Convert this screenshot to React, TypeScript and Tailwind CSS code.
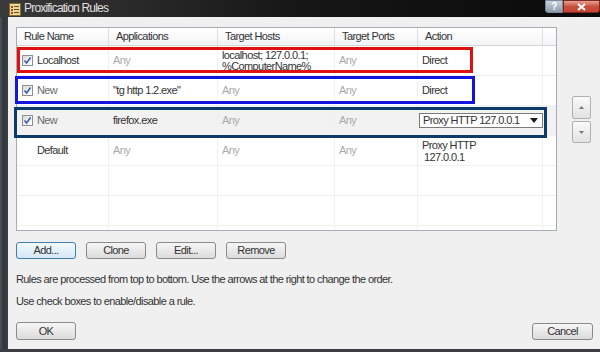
import React from 'react';

const font = "font-['Liberation_Sans',Arial,sans-serif]";

function Check() {
  return (
    <span className="w-[11px] h-[11px] border border-[#8e8f8f] bg-linear-to-br from-[#dcdcdc] to-white flex items-center justify-center shrink-0">
      <svg width="9" height="9" viewBox="0 0 9 9">
        <path d="M1.5 4.5 L3.6 7 L7.6 1.5" fill="none" stroke="#3a5ea8" strokeWidth="1.6" />
      </svg>
    </span>
  );
}

function Btn({ label, focused }: { label: string; focused?: boolean }) {
  return (
    <button
      className={
        focused
          ? 'w-[60px] h-[17px] rounded-[3px] border border-[#3c7fb1] bg-linear-to-b from-[#f4f9fd] to-[#d5e7f5] text-[11px] text-[#333] leading-none'
          : 'w-[60px] h-[17px] rounded-[3px] border border-[#8a8a8a] bg-linear-to-b from-[#f6f6f6] to-[#dcdcdc] text-[11px] text-[#333] leading-none'
      }
    >
      {label}
    </button>
  );
}

const cols = 'grid grid-cols-[92px_109px_117px_83px_125px_14px]';

type Row = {
  check?: boolean;
  name?: string;
  nameDark?: boolean;
  app?: string;
  appGray?: boolean;
  hosts?: string[];
  hostsGray?: boolean;
  ports?: string;
  action?: React.ReactNode;
  selected?: boolean;
};

const rows: Row[] = [
  {
    check: true,
    name: 'Localhost',
    nameDark: true,
    app: 'Any',
    appGray: true,
    hosts: ['localhost; 127.0.0.1;', '%ComputerName%'],
    ports: 'Any',
    action: 'Direct',
  },
  { check: true, name: 'New', app: '"tg http 1.2.exe"', hosts: ['Any'], hostsGray: true, ports: 'Any', action: 'Direct' },
  {
    check: true,
    name: 'New',
    app: 'firefox.exe',
    hosts: ['Any'],
    hostsGray: true,
    ports: 'Any',
    selected: true,
    action: (
      <div className="h-[15px] w-[124px] shrink-0 whitespace-nowrap -ml-[3px] bg-white border border-[#7a7a7a] flex items-center justify-between pl-[3px] pr-[4px]">
        <span>Proxy HTTP 127.0.0.1</span>
        <svg width="8" height="5" viewBox="0 0 8 5">
          <path d="M0 0 H8 L4 5 Z" fill="#1a1a1a" />
        </svg>
      </div>
    ),
  },
  {
    name: 'Default',
    nameDark: true,
    app: 'Any',
    appGray: true,
    hosts: ['Any'],
    hostsGray: true,
    ports: 'Any',
    action: (
      <div className="leading-[12px]">
        <div>Proxy HTTP</div>
        <div className="pl-[2px]">127.0.0.1</div>
      </div>
    ),
  },
  {},
  {},
  {},
];

export default function App() {
  return (
    <div className={`w-[600px] h-[352px] overflow-hidden relative flex flex-col bg-[#2a2a2a] text-[11px] tracking-[-0.6px] ${font}`}>
      {/* title bar */}
      <div className="h-[17px] flex items-start bg-linear-to-r from-[#3a3a3a] via-[#161616] to-[#0a0a0a]">
        <svg className="ml-[9px] mt-[3px]" width="12" height="13" viewBox="0 0 12 13">
          <rect x="0.5" y="0.5" width="11" height="12" fill="#e9d79a" stroke="#8a6a2a" />
          <rect x="2" y="3" width="2" height="2" fill="#b04020" />
          <rect x="5" y="3" width="5" height="1" fill="#6a4a20" />
          <rect x="2" y="6" width="2" height="2" fill="#b04020" />
          <rect x="5" y="6" width="5" height="1" fill="#6a4a20" />
          <rect x="2" y="9" width="2" height="2" fill="#b04020" />
          <rect x="5" y="9" width="5" height="1" fill="#6a4a20" />
        </svg>
        <span className="ml-[3px] mt-[1px] text-[12px] tracking-[-0.8px] text-[#e0e0e0] leading-[15px]">Proxification Rules</span>
        <div className="flex-1" />
        <div className="w-[18px] h-[13px] rounded-bl-[3px] border border-[#7f8a99] bg-linear-to-b from-[#c9d3de] to-[#8c9aab] flex items-center justify-center text-[10px] text-white font-bold leading-none">
          ?
        </div>
        <div className="w-[37px] h-[13px] rounded-br-[3px] border border-[#7a2a20] bg-linear-to-b from-[#e8a090] via-[#c85040] to-[#c84030] flex items-center justify-center">
          <svg width="9" height="8" viewBox="0 0 9 8">
            <path d="M1 1 L8 7 M8 1 L1 7" stroke="white" strokeWidth="2" />
          </svg>
        </div>
      </div>

      <div className="flex-1 flex">
        <div className="w-[8px] bg-linear-to-r from-[#4d535b] via-[#2f333a] to-[#3b3f46]" />
        <div className="flex-1 bg-[#f0f0f0] flex flex-col pt-[10px] pl-[8px] text-[#333]">
          <div className="flex">
            <div className="w-[541px] h-[204px] border border-[#a5acb5] bg-white overflow-hidden">
              {/* header */}
              <div className={`${cols} h-[18px] bg-linear-to-b from-white to-[#f3f4f6] border-b border-[#d5d5d5] text-[#333]`}>
                {['Rule Name', 'Applications', 'Target Hosts', 'Target Ports', 'Action', ''].map((h, i) => (
                  <div key={i} className="border-r border-[#dedede] pl-[7px] flex items-center">
                    {h}
                  </div>
                ))}
              </div>
              {rows.map((r, i) => (
                <div
                  key={i}
                  className={`${cols} h-[30px] border-b border-[#f0f0f0] ${r.selected ? 'bg-[#f2f2f2]' : 'bg-white'}`}
                >
                  <div className="border-r border-[#f0f0f0] flex items-center pl-[5px] gap-[4px]">
                    {r.check ? <Check /> : <span className="w-[11px]" />}
                    <span className={r.nameDark ? 'text-[#333]' : 'text-[#6a6a6a]'}>{r.name}</span>
                  </div>
                  <div className={`border-r border-[#f0f0f0] flex items-center pl-[4px] whitespace-nowrap ${r.appGray ? 'text-[#aaa]' : 'text-[#333]'}`}>
                    {r.app}
                  </div>
                  <div className={`border-r border-[#f0f0f0] flex flex-col justify-center pl-[4px] leading-[11px] whitespace-nowrap ${r.hostsGray ? 'text-[#aaa]' : 'text-[#333]'}`}>
                    {r.hosts?.map((h) => (
                      <div key={h}>{h}</div>
                    ))}
                  </div>
                  <div className="border-r border-[#f0f0f0] flex items-center pl-[4px] text-[#aaa]">{r.ports}</div>
                  <div className="border-r border-[#f0f0f0] flex items-center pl-[4px] text-[#333]">{r.action}</div>
                  <div />
                </div>
              ))}
            </div>
            <div className="ml-[15px] mt-[69px] flex flex-col gap-[2px]">
              <div className="w-[19px] h-[23px] border border-[#b0b0b0] rounded-[2px] bg-linear-to-b from-[#fafafa] to-[#e2e2e2] flex items-center justify-center">
                <svg width="5" height="3" viewBox="0 0 5 3"><path d="M0 3 L2.5 0 L5 3 Z" fill="#777" /></svg>
              </div>
              <div className="w-[19px] h-[22px] border border-[#b0b0b0] rounded-[2px] bg-linear-to-b from-[#fafafa] to-[#e2e2e2] flex items-center justify-center">
                <svg width="5" height="3" viewBox="0 0 5 3"><path d="M0 0 L5 0 L2.5 3 Z" fill="#777" /></svg>
              </div>
            </div>
          </div>

          <div className="flex gap-[10px] mt-[11px]">
            <Btn label="Add..." focused />
            <Btn label="Clone" />
            <Btn label="Edit..." />
            <Btn label="Remove" />
          </div>

          <div className="mt-[14px] leading-[13px] text-[#333]">
            Rules are processed from top to bottom. Use the arrows at the right to change the order.
          </div>
          <div className="mt-[9px] leading-[13px] text-[#333]">Use check boxes to enable/disable a rule.</div>

          <div className="mt-[14px] flex justify-between items-start pr-[7px]">
            <button className="w-[60px] h-[18px] rounded-[3px] border border-[#8a8a8a] bg-linear-to-b from-[#f6f6f6] to-[#dcdcdc] text-[11px] text-[#333] leading-none">
              OK
            </button>
            <button className="mt-[1px] w-[61px] h-[17px] rounded-[3px] border border-[#8a8a8a] bg-linear-to-b from-[#f6f6f6] to-[#dcdcdc] text-[11px] text-[#333] leading-none">
              Cancel
            </button>
          </div>
        </div>
      </div>
      <div className="h-[3px] bg-[#3a3d42]" />

      {/* annotation boxes */}
      <div className="absolute left-[17px] top-[47px] w-[456px] h-[26px] border-[3px] border-[#e01010]" />
      <div className="absolute left-[15px] top-[76px] w-[460px] h-[28px] border-[3px] border-[#1414e0]" />
      <div className="absolute left-[14px] top-[107px] w-[533px] h-[31px] border-[3px] border-[#0c3a6a]" />
    </div>
  );
}
